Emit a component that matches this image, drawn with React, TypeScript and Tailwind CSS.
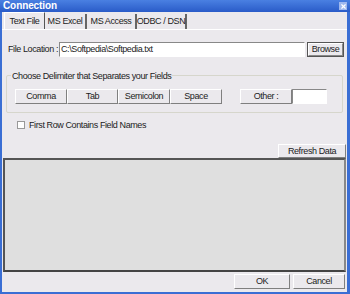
import { X } from "lucide-react";

const font = { fontFamily: '"Liberation Sans", Arial, sans-serif' };

function Btn({ label, className = "" }: { label: string; className?: string }) {
  return (
    <div
      className={`flex items-center justify-center border border-t-white border-l-white border-b-[#7f7f7f] border-r-[#7f7f7f] bg-[#ebe9ed] text-[9px] leading-none tracking-[-0.4px] text-[#222] ${className}`}
    >
      {label}
    </div>
  );
}

export default function App() {
  return (
    <div style={font} className="flex h-[294px] w-[350px] flex-col overflow-hidden bg-[#3a6ed4]">
      {/* title bar */}
      <div className="flex h-[12px] shrink-0 items-center justify-between bg-gradient-to-b from-[#4a80e2] to-[#2a5bc8] pl-[3px] pr-[3px]">
        <span className="text-[10px] font-bold leading-none tracking-[-0.1px] text-white">Connection</span>
        <div className="flex h-[8px] w-[8px] items-center justify-center bg-[#9fb8ee]">
          <X className="size-[7px] text-white" strokeWidth={4} />
        </div>
      </div>

      <div className="mb-[2px] ml-[2px] mr-[3px] flex h-[280px] flex-col bg-[#ebe9ed] text-[9px] leading-none tracking-[-0.4px] text-[#222]">
        {/* tabs */}
        <div className="flex h-[17px] shrink-0 items-end whitespace-nowrap pl-[2px]">
          <div className="flex h-[17px] w-[41px] items-center justify-center border-r border-t border-l border-t-white border-l-white border-r-[#555]">Text File</div>
          <div className="flex h-[15px] w-[42px] items-center justify-center border-r-2 border-r-[#666]">MS Excel</div>
          <div className="flex h-[15px] w-[50px] items-center justify-center border-r-2 border-r-[#666]">MS Access</div>
          <div className="flex h-[15px] w-[50px] items-center justify-center border-r-2 border-r-[#666]">ODBC / DSN</div>
        </div>
        <div className="h-px shrink-0 bg-white" />

        {/* file location */}
        <div className="mt-[12px] flex h-[15px] shrink-0 items-center pl-[6px] pr-[3px]">
          <span className="w-[51px] whitespace-nowrap">File Location :</span>
          <div className="flex h-[15px] w-[246px] items-center border border-t-[#888] border-l-[#888] border-b-white border-r-white bg-white pl-[1px]">
            C:\Softpedia\Softpedia.txt
          </div>
          <div className="ml-[2px] flex h-[15px] w-[37px] items-center justify-center border border-[#555] bg-[#ebe9ed]">
            <div className="flex h-[13px] w-[35px] items-center justify-center border border-t-white border-l-white border-b-[#888] border-r-[#888]">
              Browse
            </div>
          </div>
        </div>

        {/* delimiter group */}
        <div className="relative mx-[4px] mt-[18px] h-[38px] shrink-0 rounded-[2px] border border-[#d6d6cc]">
          <span className="absolute -top-[4px] left-[4px] whitespace-nowrap bg-[#ebe9ed] px-[1px]">
            Choose Delimiter that Separates your Fields
          </span>
          <div className="mt-[13px] flex pl-[8px]">
            <Btn label="Comma" className="h-[15px] w-[52px]" />
            <Btn label="Tab" className="h-[15px] w-[51px]" />
            <Btn label="Semicolon" className="h-[15px] w-[52px]" />
            <Btn label="Space" className="h-[15px] w-[52px]" />
            <Btn label="Other :" className="ml-[18px] h-[15px] w-[52px]" />
            <div className="h-[15px] w-[35px] border border-t-[#888] border-l-[#888] border-b-white border-r-white bg-white" />
          </div>
        </div>

        {/* checkbox */}
        <div className="mt-[7px] flex h-[10px] shrink-0 items-center pl-[15px]">
          <div className="mr-[4px] h-[8px] w-[8px] border border-[#999] bg-white" />
          First Row Contains Field Names
        </div>

        {/* refresh */}
        <div className="mt-[14px] flex shrink-0 justify-end pr-[1px]">
          <Btn label="Refresh Data" className="h-[14px] w-[68px]" />
        </div>

        {/* grid panel */}
        <div className="mx-[1px] h-[114px] shrink-0 border-2 border-t-[#555] border-l-[#555] border-b-[#444] border-r-[#888] bg-[#dfdfdf]" />

        {/* footer */}
        <div className="mt-[2px] flex shrink-0 justify-end gap-[3px] pr-[2px]">
          <Btn label="OK" className="h-[15px] w-[56px]" />
          <Btn label="Cancel" className="h-[15px] w-[52px]" />
        </div>
      </div>
    </div>
  );
}
